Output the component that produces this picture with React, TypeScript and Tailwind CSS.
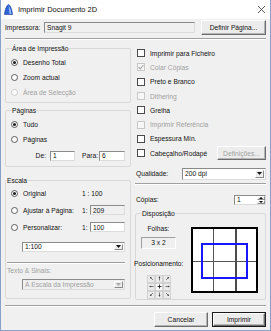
import React from 'react';

const DIS = 'text-[#a0a0a0]';

function Radio({ label, checked = false, disabled = false }: { label: string; checked?: boolean; disabled?: boolean }) {
    return (
        <div className="flex items-center">
            <span
                className={`w-[7px] h-[7px] rounded-full border bg-white flex items-center justify-center ${disabled ? 'border-[#c8c8c8]' : 'border-[#5a5a5a]'}`}
            >
                {checked && <span className="w-[3px] h-[3px] rounded-full bg-[#1a1a1a]" />}
            </span>
            <span className={`ml-[5px] ${disabled ? DIS : ''}`}>{label}</span>
        </div>
    );
}

function Check({ label, checked = false, disabled = false, children }: { label: string; checked?: boolean; disabled?: boolean; children?: React.ReactNode }) {
    return (
        <div className="flex items-center h-[14.3px]">
            <span
                className={`ml-[2px] w-[8px] h-[8px] border flex items-center justify-center ${disabled ? 'border-[#c8c8c8] bg-[#f7f7f7]' : 'border-[#4a4a4a] bg-white'}`}
            >
                {checked && (
                    <svg width="6" height="6" viewBox="0 0 6 6">
                        <path d="M0.6 3 L2.3 4.8 L5.4 1" fill="none" stroke={disabled ? '#a8a8a8' : '#222'} strokeWidth="1.1" />
                    </svg>
                )}
            </span>
            <span className={`ml-[5px] ${disabled ? DIS : ''}`}>{label}</span>
            {children}
        </div>
    );
}

function Btn({ children, disabled = false, isDefault = false, className = '' }: { children: React.ReactNode; disabled?: boolean; isDefault?: boolean; className?: string }) {
    return (
        <div className={`${isDefault ? 'border border-[#1a1a1a]' : ''} ${className}`}>
            <div
                className={`w-full h-full flex items-center justify-center border border-t-white border-l-white border-r-[#6d6d6d] border-b-[#6d6d6d] shadow-[inset_-1px_-1px_0_#b4b4b4] bg-[#ececec] ${disabled ? DIS : ''}`}
            >
                {children}
            </div>
        </div>
    );
}

function Field({ value, readOnly = false, className = '' }: { value: string; readOnly?: boolean; className?: string }) {
    return (
        <div
            className={`flex items-center pl-[2px] border border-t-[#8a8a8a] border-l-[#8a8a8a] border-r-[#dcdcdc] border-b-[#dcdcdc] ${readOnly ? 'bg-[#f0f0f0]' : 'bg-white'} ${className}`}
        >
            {value}
        </div>
    );
}

function Combo({ value, disabled = false, className = '' }: { value: string; disabled?: boolean; className?: string }) {
    return (
        <div
            className={`flex items-stretch border border-t-[#8a8a8a] border-l-[#8a8a8a] border-r-[#dcdcdc] border-b-[#dcdcdc] ${disabled ? 'bg-[#f0f0f0] text-[#a0a0a0]' : 'bg-white'} ${className}`}
        >
            <span className="flex-1 flex items-center pl-[2px]">{value}</span>
            <span className="w-[9px] my-[1px] mr-[1px] bg-[#ececec] border border-t-white border-l-white border-r-[#8a8a8a] border-b-[#8a8a8a] flex items-center justify-center">
                <svg width="5" height="3" viewBox="0 0 5 3">
                    <path d="M0 0 H5 L2.5 3 Z" fill={disabled ? '#a8a8a8' : '#111'} />
                </svg>
            </span>
        </div>
    );
}

function GroupBox({ title, className = '', children }: { title: string; className?: string; children: React.ReactNode }) {
    return (
        <fieldset className={`border border-[#d9d9d9] rounded-[2px] ${className}`}>
            <legend className="ml-[1px] leading-[9px]">{title}</legend>
            {children}
        </fieldset>
    );
}

function Arrow({ dx, dy }: { dx: number; dy: number }) {
    if (dx === 0 && dy === 0) {
        return (
            <svg width="5" height="5" viewBox="0 0 5 5">
                <path d="M2.5 0.5 V4.5 M0.5 2.5 H4.5" stroke="#222" strokeWidth="0.9" />
            </svg>
        );
    }
    const len = Math.hypot(dx, dy);
    const ux = dx / len;
    const uy = dy / len;
    const tx = 2.5 + ux * 2;
    const ty = 2.5 + uy * 2;
    const bx = 2.5 - ux * 2;
    const by = 2.5 - uy * 2;
    const px = -uy;
    const py = ux;
    const head = `M${tx} ${ty} L${tx - ux * 1.5 + px * 1.1} ${ty - uy * 1.5 + py * 1.1} L${tx - ux * 1.5 - px * 1.1} ${ty - uy * 1.5 - py * 1.1} Z`;
    return (
        <svg width="5" height="5" viewBox="0 0 5 5">
            <path d={`M${bx} ${by} L${tx} ${ty}`} stroke="#444" strokeWidth="0.7" />
            <path d={head} fill="#444" />
        </svg>
    );
}

const dirs = [
    [-1, -1], [0, -1], [1, -1],
    [-1, 0], [0, 0], [1, 0],
    [-1, 1], [0, 1], [1, 1],
];

export default function App() {
    return (
        <div className="w-[271px] h-[331px] bg-[#f0f0f0] border-x border-b border-[#86a2c8] flex flex-col text-[6.7px] leading-[9px] text-[#111] font-['Liberation_Sans',Arial,sans-serif] overflow-hidden">
            {/* title bar */}
            <div className="h-[19px] shrink-0 bg-white flex items-center">
                <svg className="ml-[3px]" width="9" height="11" viewBox="0 0 9 11">
                    <path d="M0.5 10.5 C0.8 6 2.5 1.2 4.5 0.5 C6.5 1.2 8.2 6 8.5 10.5 Z" fill="#2f64d6" />
                    <path d="M4.5 2 C6 3 7.2 6.5 7.5 10 L5.5 10 Z" fill="#8fb6f2" />
                    <path d="M0.5 10.5 C0.8 6 2.5 1.2 4.5 0.5 C6.5 1.2 8.2 6 8.5 10.5 Z" fill="none" stroke="#173f9c" strokeWidth="0.6" />
                </svg>
                <span className="ml-[5px] text-[7.5px]">Imprimir Documento 2D</span>
                <svg className="ml-auto mr-[5px]" width="7" height="7" viewBox="0 0 7 7">
                    <path d="M0 0 L7 7 M7 0 L0 7" stroke="#333" strokeWidth="0.8" />
                </svg>
            </div>

            <div className="flex-1 flex flex-col px-[4px]">
                {/* printer row */}
                <div className="mt-[1px] h-[15px] flex items-center">
                    <span className="w-[39px]">Impressora:</span>
                    <Field value="Snagit 9" readOnly className="w-[151px] h-[11px]" />
                    <Btn className="ml-auto w-[65px] h-[15px]">Definir Página...</Btn>
                </div>
                <div className="mt-[3px] border-t border-[#a0a0a0] border-b border-b-white" />

                <div className="flex gap-[4px]">
                    {/* left column */}
                    <div className="w-[126px] flex flex-col">
                        <GroupBox title="Área de Impressão" className="mt-[3.5px] pl-[5px] pt-[2px] pb-[2px]">
                            <div className="h-[15px] flex items-center"><Radio label="Desenho Total" checked /></div>
                            <div className="h-[15px] flex items-center"><Radio label="Zoom actual" /></div>
                            <div className="h-[15px] flex items-center"><Radio label="Área de Selecção" disabled /></div>
                        </GroupBox>

                        <GroupBox title="Páginas" className="mt-[3px] pl-[5px] pt-[2px] pb-[2px]">
                            <div className="h-[15px] flex items-center"><Radio label="Tudo" checked /></div>
                            <div className="h-[16px] flex items-center"><Radio label="Páginas" /></div>
                            <div className="h-[16px] flex items-center -ml-[5px]">
                                <span className="w-[44px] text-right pr-[4px]">De:</span>
                                <Field value="1" className="w-[25px] h-[10px]" />
                                <span className="ml-[7px] w-[17px]">Para:</span>
                                <Field value="6" className="w-[26px] h-[10px]" />
                            </div>
                        </GroupBox>

                        <GroupBox title="Escala" className="mt-[9px] pb-[8px]">
                            <div className="h-[17px] flex items-center">
                                <div className="w-[76px] pl-[5px]"><Radio label="Original" checked /></div>
                                <span>1 : 100</span>
                            </div>
                            <div className="h-[17px] flex items-center">
                                <div className="w-[76px] pl-[5px]"><Radio label="Ajustar à Página:" /></div>
                                <span className="w-[8px]">1:</span>
                                <Field value="209" readOnly className="w-[35px] h-[10px]" />
                            </div>
                            <div className="h-[17px] flex items-center">
                                <div className="w-[76px] pl-[5px]"><Radio label="Personalizar:" /></div>
                                <span className="w-[8px]">1:</span>
                                <Field value="100" className="w-[35px] h-[10px]" />
                            </div>
                            <Combo value="1:100" className="mt-[6px] ml-[16px] w-[103px] h-[10px]" />
                            <div className="mt-[10px] ml-[1px] w-[118px] border-t border-[#a0a0a0] border-b border-b-white" />
                            <div className={`mt-[2px] ml-[1px] ${DIS}`}>Texto &amp; Sinais:</div>
                            <Combo value="À Escala da Impressão" disabled className="mt-[4.5px] ml-[16px] w-[103px] h-[11px]" />
                        </GroupBox>
                    </div>

                    {/* right column */}
                    <div className="w-[131px] flex flex-col">
                        <div className="pt-[6px]">
                            <Check label="Imprimir para Ficheiro" />
                            <Check label="Colar Cópias" checked disabled />
                            <Check label="Preto e Branco" />
                            <Check label="Dithering" disabled />
                            <Check label="Grelha" />
                            <Check label="Imprimir Referência" disabled />
                            <Check label="Espessura Mín." />
                            <Check label="Cabeçalho/Rodapé">
                                <Btn disabled className="ml-auto w-[49px] h-[14px]">Definições...</Btn>
                            </Check>
                        </div>

                        <div className="mt-[7px] h-[13px] flex items-center">
                            <span className="ml-[1px] w-[46px]">Qualidade:</span>
                            <Combo value="200 dpi" className="ml-auto w-[84px] h-[12px]" />
                        </div>
                        <div className="mt-[3px] border-t border-[#a0a0a0] border-b border-b-white" />

                        <div className="mt-[9px] h-[11px] flex items-center">
                            <span className="ml-[1px]">Cópias:</span>
                            <div className="ml-auto w-[32px] h-[10px] flex border border-t-[#8a8a8a] border-l-[#8a8a8a] border-r-[#dcdcdc] border-b-[#dcdcdc] bg-white">
                                <span className="flex-1 flex items-center pl-[2px]">1</span>
                                <span className="w-[8px] flex flex-col bg-[#ececec]">
                                    <span className="flex-1 flex items-center justify-center border border-t-white border-l-white border-r-[#8a8a8a] border-b-[#8a8a8a]">
                                        <svg width="4" height="2" viewBox="0 0 4 2"><path d="M0 2 H4 L2 0 Z" fill="#111" /></svg>
                                    </span>
                                    <span className="flex-1 flex items-center justify-center border border-t-white border-l-white border-r-[#8a8a8a] border-b-[#8a8a8a]">
                                        <svg width="4" height="2" viewBox="0 0 4 2"><path d="M0 0 H4 L2 2 Z" fill="#111" /></svg>
                                    </span>
                                </span>
                            </div>
                        </div>

                        <GroupBox title="Disposição" className="mt-[4px] h-[91px] pl-[5px]">
                            <div className="flex">
                                <div className="w-[55px] -ml-[5px] flex flex-col">
                                    <div className="mt-[6px] ml-[5px] w-[35px] text-center">Folhas:</div>
                                    <div className="mt-[3.5px] ml-[5px] w-[35px] h-[12px] flex items-center justify-center border border-t-[#a0a0a0] border-l-[#a0a0a0] border-r-white border-b-white">
                                        3 x 2
                                    </div>
                                    <div className="mt-[10px] -ml-[2px] whitespace-nowrap">Posicionamento:</div>
                                    <div className="mt-[7px] ml-[11px] grid grid-cols-3 w-[24px] h-[24px]">
                                        {dirs.map(([dx, dy], i) => (
                                            <span
                                                key={i}
                                                className={`flex items-center justify-center border border-[#d2d2d2] ${dx === 0 && dy === 0 ? 'bg-white' : 'bg-[#ebebeb]'}`}
                                            >
                                                <Arrow dx={dx} dy={dy} />
                                            </span>
                                        ))}
                                    </div>
                                </div>
                                <svg className="mt-[8.5px]" width="67" height="66" viewBox="0 0 67 66">
                                    <rect x="0" y="0" width="67" height="66" fill="white" />
                                    <line x1="22.5" y1="1" x2="22.5" y2="65" stroke="#555" strokeWidth="1" />
                                    <line x1="45" y1="1" x2="45" y2="65" stroke="#111" strokeWidth="1.5" />
                                    <line x1="1" y1="34.5" x2="66" y2="34.5" stroke="#555" strokeWidth="1" />
                                    <rect x="11" y="17" width="45" height="34" fill="none" stroke="#1818ff" strokeWidth="2" />
                                    <rect x="1" y="1" width="65" height="64" fill="none" stroke="#000" strokeWidth="2" />
                                </svg>
                            </div>
                        </GroupBox>
                    </div>
                </div>

                <div className="mt-[5px] border-t border-[#a0a0a0] border-b border-b-white" />
                <div className="mt-[5px] flex justify-end gap-[4px]">
                    <Btn className="w-[54px] h-[15px]">Cancelar</Btn>
                    <Btn isDefault className="w-[54px] h-[15px]">Imprimir</Btn>
                </div>
            </div>
        </div>
    );
}
